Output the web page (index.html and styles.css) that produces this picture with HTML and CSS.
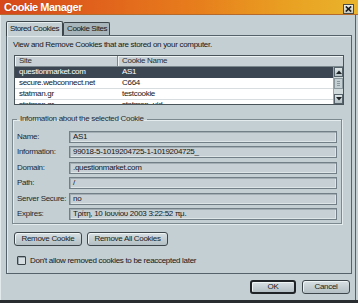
FILE: index.html
```html
<!DOCTYPE html>
<html>
<head>
<meta charset="utf-8">
<link rel="stylesheet" href="styles.css">
</head>
<body>
<div class="window">
  <div class="titlebar">
    <span class="title">Cookie Manager</span>
    <span class="close"><svg width="7" height="6" viewBox="0 0 7 6"><path d="M0.8 0.5 L6.2 5.5 M6.2 0.5 L0.8 5.5" stroke="#1c1c1c" stroke-width="1.7"/></svg></span>
  </div>
  <div class="content">
    <div class="tabs">
      <div class="tab active">Stored Cookies</div>
      <div class="tab">Cookie Sites</div>
    </div>
    <div class="panel">
      <div class="desc">View and Remove Cookies that are stored on your computer.</div>
      <div class="list">
        <div class="list-head">
          <div class="hcell site">Site</div>
          <div class="hcell name">Cookie Name</div>
        </div>
        <div class="list-body">
          <div class="rows">
            <div class="row sel"><span class="c-site">questionmarket.com</span><span class="c-name">AS1</span></div>
            <div class="row"><span class="c-site">secure.webconnect.net</span><span class="c-name">C664</span></div>
            <div class="row"><span class="c-site">statman.gr</span><span class="c-name">testcookie</span></div>
            <div class="row"><span class="c-site">statman.gr</span><span class="c-name">statman_uid</span></div>
          </div>
          <div class="scrollbar">
            <div class="sb-btn"><svg width="6" height="4" viewBox="0 0 6 4"><path d="M0 4 L3 0.5 L6 4 Z" fill="#1e2428"/></svg></div>
            <div class="sb-thumb"><span></span><span></span><span></span></div>
            <div class="sb-track"></div>
            <div class="sb-btn"><svg width="6" height="4" viewBox="0 0 6 4"><path d="M0 0 L3 3.5 L6 0 Z" fill="#1e2428"/></svg></div>
          </div>
        </div>
      </div>
      <fieldset class="group">
        <legend>Information about the selected Cookie</legend>
        <div class="fields">
          <span class="lbl">Name:</span><div class="field">AS1</div>
          <span class="lbl">Information:</span><div class="field">99018-5-1019204725-1-1019204725_</div>
          <span class="lbl">Domain:</span><div class="field">.questionmarket.com</div>
          <span class="lbl">Path:</span><div class="field">/</div>
          <span class="lbl">Server Secure:</span><div class="field">no</div>
          <span class="lbl">Expires:</span><div class="field">Τρίτη, 10 Ιουνίου 2003 3:22:52 πμ.</div>
        </div>
      </fieldset>
      <div class="actions">
        <button class="btn w-rc">Remove Cookie</button>
        <button class="btn w-rac">Remove All Cookies</button>
      </div>
      <div class="check">
        <span class="box"></span>
        <span class="check-text">Don't allow removed cookies to be reaccepted later</span>
      </div>
    </div>
    <div class="footer">
      <button class="btn default w-ok">OK</button>
      <button class="btn w-cancel">Cancel</button>
    </div>
  </div>
</div>
</body>
</html>
```
FILE: styles.css
```css
* { box-sizing: border-box; }
html, body { margin: 0; padding: 0; }
body {
  width: 358px;
  height: 303px;
  overflow: hidden;
  background: #2a2d2f;
  font-family: "Liberation Sans", Arial, sans-serif;
  font-size: 8px;
  letter-spacing: -0.3px;
  color: #141618;
}
.window {
  width: 358px;
  height: 303px;
  background: #c4cfd3;
  border-bottom: 3px solid #2a2d2f;
}
.titlebar {
  height: 15px;
  display: flex;
  align-items: flex-start;
  justify-content: space-between;
  background: linear-gradient(to right, #d6461a 0%, #e0601c 25%, #e77e1c 55%, #e9a022 80%, #e9b42c 100%);
  border-bottom: 1px solid #b46a2c;
}
.title {
  color: #ffffff;
  font-weight: bold;
  font-size: 11px;
  letter-spacing: -0.5px;
  line-height: 15px;
  padding-left: 4px;
  text-shadow: 0 0 1px rgba(120,40,0,0.5);
}
.close {
  margin-top: 4px;
  margin-right: 4px;
  width: 11px;
  height: 10px;
  border: 1px solid #4a4a46;
  background: linear-gradient(#eceee8, #c4c8c0);
  display: flex;
  align-items: center;
  justify-content: center;
}
.content {
  height: 285px;
  margin-right: 2px;
  border-left: 1px solid #e2eaec;
  border-right: 1px solid #55616a;
}
.tabs {
  display: flex;
  align-items: flex-end;
  padding-top: 6px;
  padding-left: 5px;
  height: 20px;
}
.tab {
  border: 1px solid #3c464b;
  border-bottom: none;
  border-radius: 2px 2px 0 0;
  line-height: 12px;
  padding-left: 3px;
  letter-spacing: -0.4px;
  white-space: nowrap;
  position: relative;
}
.tab.active {
  width: 57px;
  height: 15px;
  margin-bottom: -1px;
  background: #c4cfd3;
  box-shadow: inset 1px 1px 0 #e6eef0;
  z-index: 1;
  padding-top: 1px;
}
.tab:not(.active) {
  width: 47px;
  height: 13px;
  background: #a8b5ba;
  padding-left: 3px;
}
.panel {
  margin-left: 5px;
  width: 346px;
  height: 239px;
  border: 1px solid #56626a;
  background: #c4cfd3;
  box-shadow: inset 1px 1px 0 #e2eaec;
}
.desc {
  padding: 3px 0 0 6px;
  height: 15px;
  line-height: 12px;
}
.list {
  margin: 4px 0 0 7px;
  width: 330px;
  height: 50px;
  border: 1px solid #48545a;
  background: #ffffff;
  overflow: hidden;
}
.list-head {
  display: flex;
  height: 11px;
  background: #c8d2d6;
}
.hcell {
  line-height: 10px;
  padding-left: 4px;
  border-right: 1px solid #7a878d;
  border-bottom: 1px solid #7a878d;
  box-shadow: inset 1px 1px 0 #eef3f4;
  color: #2a3034;
}
.hcell.site { width: 103px; }
.hcell.name { flex: 1; border-right: none; }
.list-body {
  display: flex;
  height: 37px;
}
.rows {
  flex: 1;
  overflow: hidden;
}
.row {
  display: flex;
  height: 11px;
  line-height: 10px;
  border-bottom: 1px solid #d8dee0;
}
.row.sel {
  background: #3b4652;
  color: #ffffff;
  border-bottom-color: #3b4652;
}
.c-site { width: 103px; padding-left: 4px; }
.c-name { padding-left: 4px; }
.scrollbar {
  width: 10px;
  display: flex;
  flex-direction: column;
  background: #d0d9dc;
  border-left: 1px solid #9aa6ab;
}
.sb-btn {
  height: 10px;
  background: linear-gradient(#dfe6e8, #b4c0c4);
  border: 1px solid #56626a;
  display: flex;
  align-items: center;
  justify-content: center;
}
.sb-thumb {
  height: 11px;
  margin-top: 1px;
  background: #c4cfd3;
  border: 1px solid #8a979c;
  display: flex;
  flex-direction: column;
  justify-content: center;
  gap: 1px;
  padding: 0 2px;
}
.sb-thumb span { height: 1px; background: #8a979c; }
.sb-track { flex: 1; }
.group {
  margin: 9px 0 0 5px;
  width: 330px;
  padding: 7px 4px 3px 4px;
  border: 1px solid #7c8a90;
  box-shadow: inset 1px 1px 0 #e4ecee, 1px 1px 0 #e4ecee;
  min-width: 0;
}
.group legend {
  padding: 0 3px;
  line-height: 10px;
  color: #23292d;
}
.fields {
  display: grid;
  grid-template-columns: 52px 268px;
  grid-auto-rows: 12px;
  row-gap: 3.4px;
}
.lbl {
  line-height: 12px;
  color: #23292d;
}
.field {
  line-height: 10px;
  padding-left: 3px;
  border: 1px solid #727f86;
  background: #c7d1d5;
  box-shadow: inset 1px 1px 0 #a2aeb3, inset -1px -1px 0 #dde5e7;
  white-space: nowrap;
  overflow: hidden;
}
.actions {
  display: flex;
  gap: 5px;
  margin-top: 8px;
  padding-left: 7px;
}
.btn {
  font-family: "Liberation Sans", Arial, sans-serif;
  font-size: 8px;
  letter-spacing: -0.3px;
  color: #1a1e20;
  height: 14px;
  padding: 0;
  line-height: 12px;
  border: 1px solid #3c464b;
  border-radius: 3px;
  background: linear-gradient(#d8e0e3, #b3bfc4);
  box-shadow: inset 1px 1px 0 #eef3f4;
}
.w-rc { width: 68px; }
.w-rac { width: 81px; }
.check {
  display: flex;
  align-items: center;
  margin-top: 10px;
  padding-left: 10px;
}
.box {
  width: 9px;
  height: 9px;
  border: 1px solid #3a4448;
  border-radius: 1px;
  background: #d6dee1;
  box-shadow: inset 1px 1px 0 #9aa6ab;
}
.check-text {
  margin-left: 4px;
  line-height: 9px;
}
.footer {
  display: flex;
  justify-content: flex-end;
  gap: 6px;
  padding-top: 6px;
  padding-right: 5px;
}
.btn.default { border: 2px solid #202426; line-height: 10px; }
.w-ok { width: 46px; }
.w-cancel { width: 48px; }
```
